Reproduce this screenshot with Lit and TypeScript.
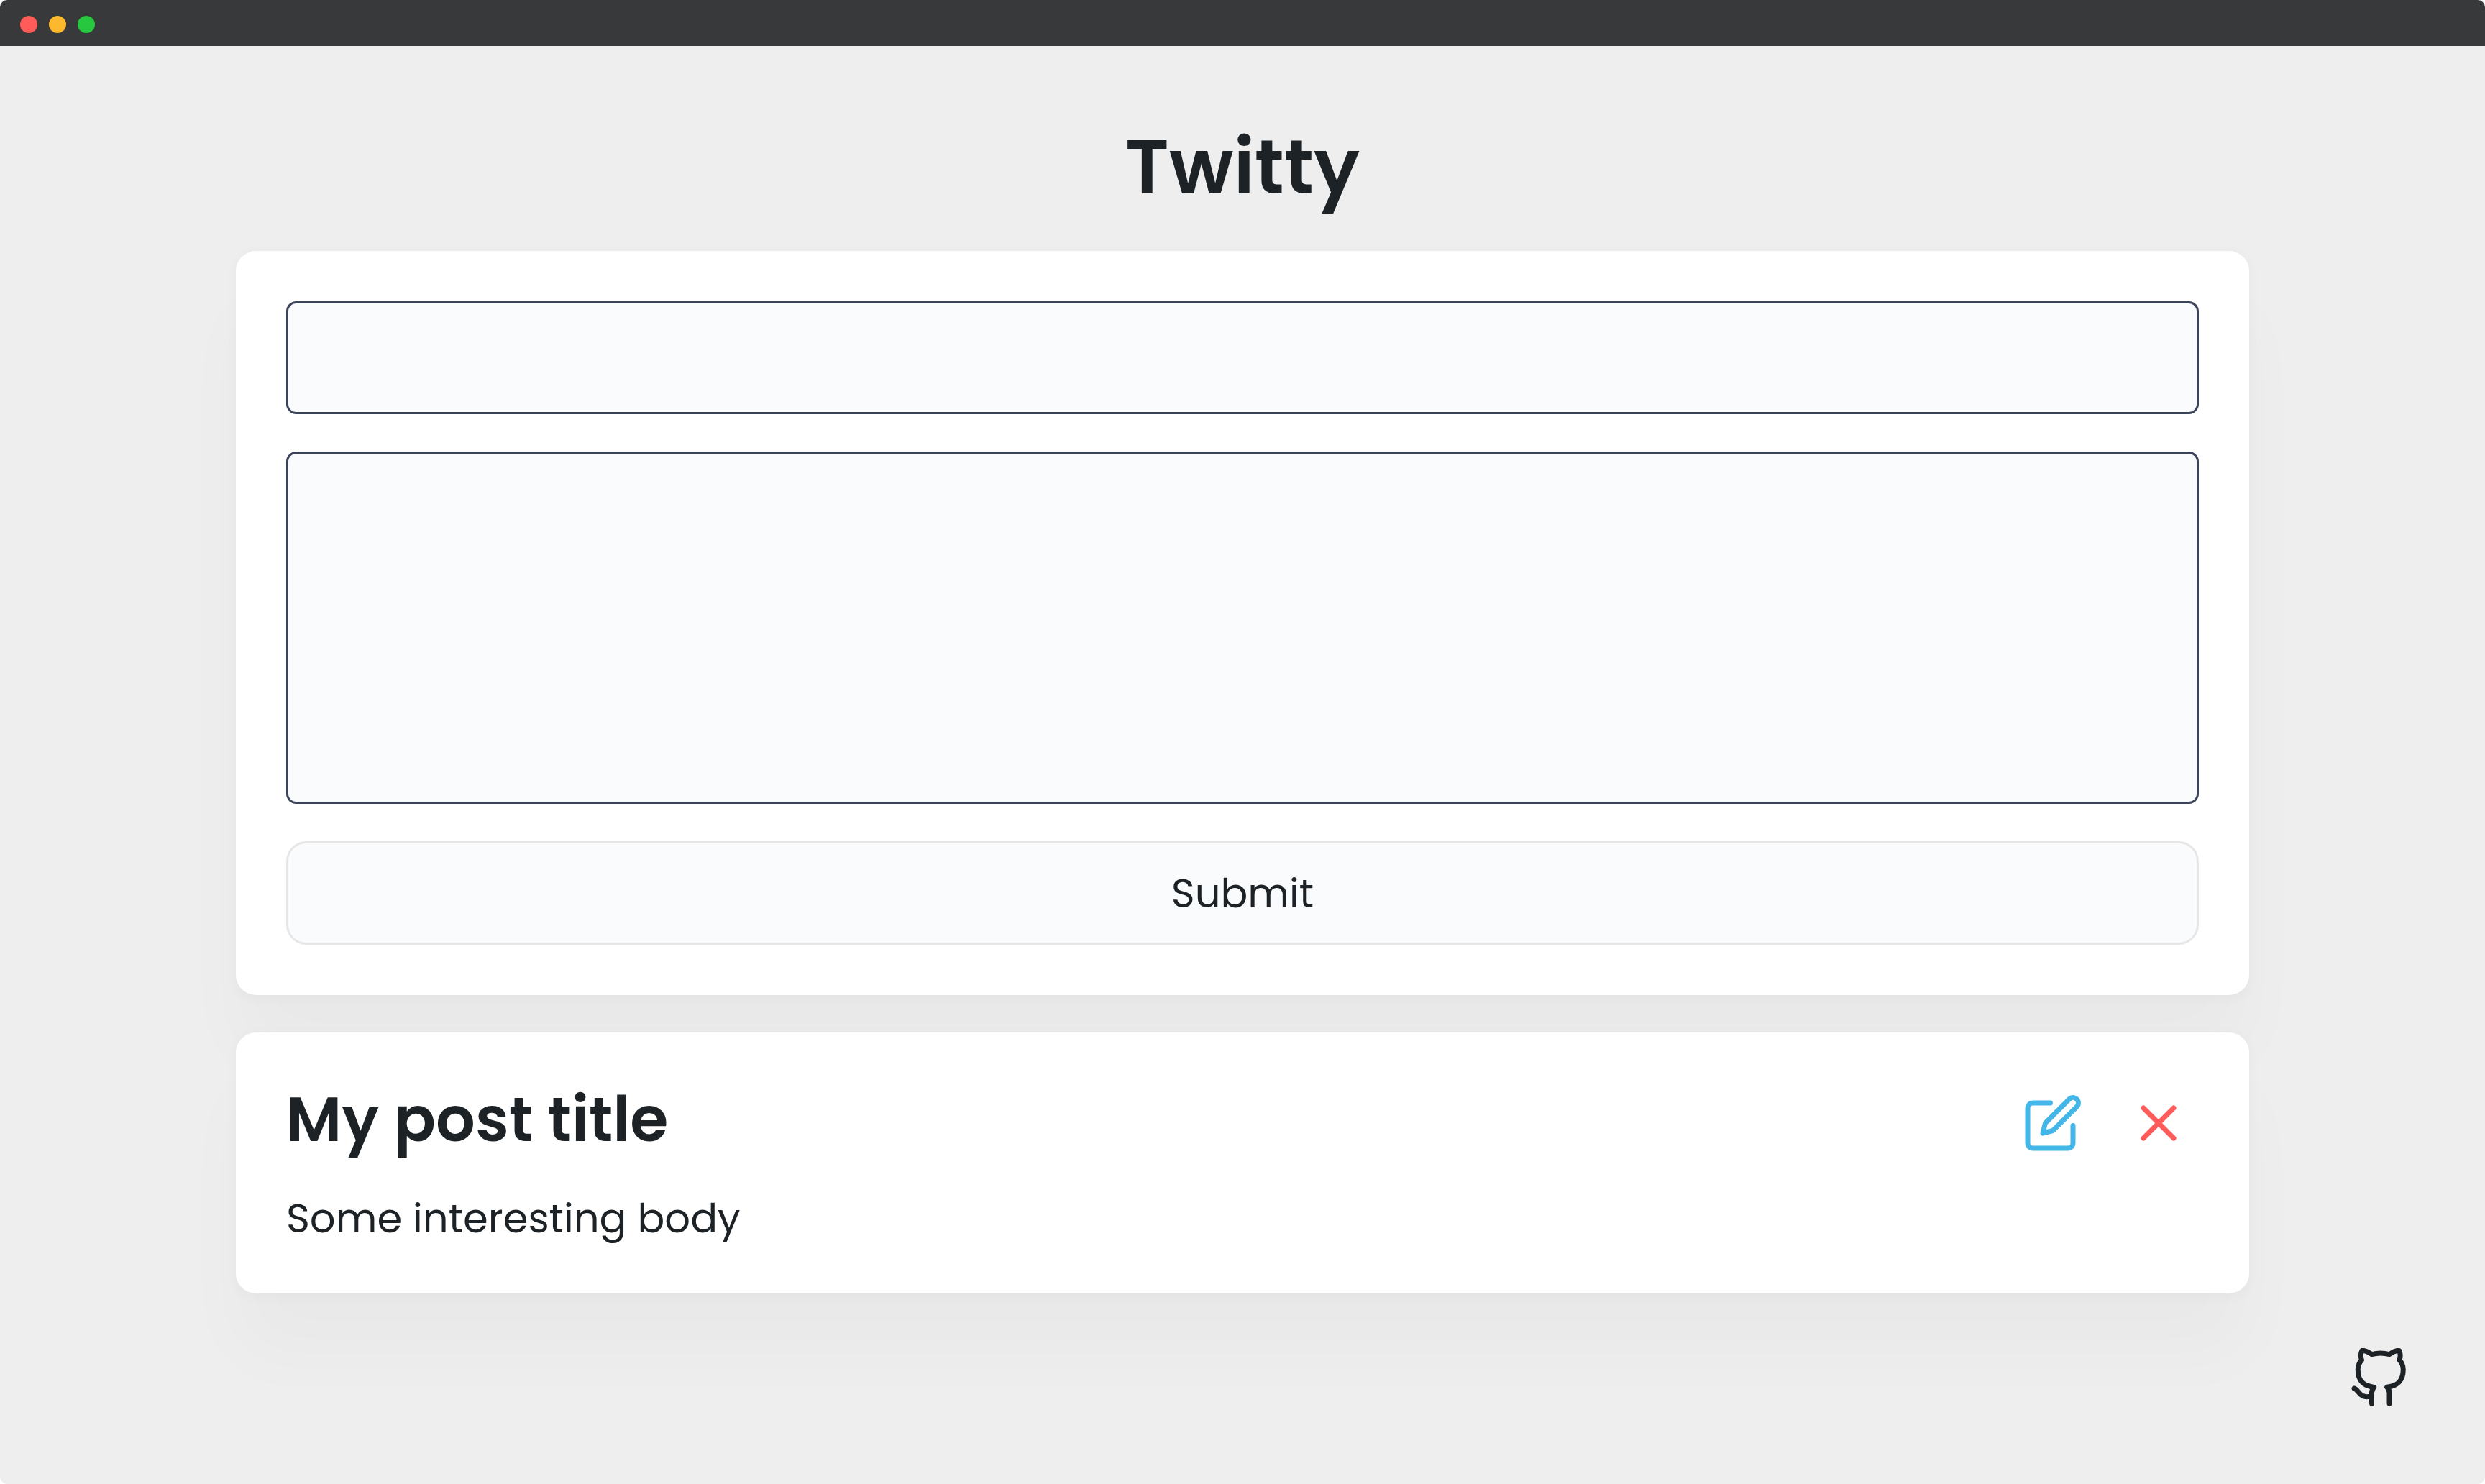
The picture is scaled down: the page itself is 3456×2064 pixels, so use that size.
import { LitElement, html, css, svg } from "lit";
import { customElement, property, state } from "lit/decorators.js";

interface Post {
  id: number;
  title: string;
  body: string;
}

const editIcon = svg`
  <path d="M11 4H4a2 2 0 0 0-2 2v14a2 2 0 0 0 2 2h14a2 2 0 0 0 2-2v-7" />
  <path d="M18.5 2.5a2.121 2.121 0 0 1 3 3L12 15l-4 1 1-4 9.5-9.5z" />
`;

const closeIcon = svg`
  <line x1="18" y1="6" x2="6" y2="18" />
  <line x1="6" y1="6" x2="18" y2="18" />
`;

const githubIcon = svg`
  <path d="M9 19c-5 1.5-5-2.5-7-3m14 6v-3.87a3.37 3.37 0 0 0-.94-2.61c3.14-.35 6.44-1.54 6.44-7A5.44 5.44 0 0 0 20 4.77 5.07 5.07 0 0 0 19.91 1S18.73.65 16 2.48a13.38 13.38 0 0 0-7 0C6.27.65 5.09 1 5.09 1A5.07 5.07 0 0 0 5 4.77a5.44 5.44 0 0 0-1.5 3.78c0 5.42 3.3 6.61 6.44 7A3.37 3.37 0 0 0 9 18.13V22" />
`;

const shared = css`
  * {
    box-sizing: border-box;
  }

  .card {
    padding: 70px;
    border-radius: 28px;
    background: #ffffff;
    box-shadow:
      0 4px 20px rgba(0, 0, 0, 0.03),
      0 84px 98px rgba(0, 0, 0, 0.025);
  }

  .icon {
    display: block;
    width: 84px;
    height: 84px;
    fill: none;
    stroke: currentColor;
    stroke-width: 2;
    stroke-linecap: round;
    stroke-linejoin: round;
  }
`;

@customElement("window-bar")
export class WindowBar extends LitElement {
  static styles = css`
    :host {
      display: flex;
      align-items: center;
      gap: 16px;
      height: 64px;
      padding: 4px 28px 0;
      box-sizing: border-box;
      background: #38393b;
    }

    .dot {
      width: 24px;
      height: 24px;
      border-radius: 50%;
    }

    .close {
      background: #ff5b59;
    }

    .minimize {
      background: #fdb830;
    }

    .zoom {
      background: #27c840;
    }
  `;

  render() {
    return html`
      <span class="dot close"></span>
      <span class="dot minimize"></span>
      <span class="dot zoom"></span>
    `;
  }
}

@customElement("post-form")
export class PostForm extends LitElement {
  static styles = [
    shared,
    css`
      :host {
        display: block;
      }

      .form {
        display: flex;
        flex-direction: column;
        gap: 52px;
      }

      .field {
        display: block;
        width: 100%;
        margin: 0;
        padding: 28px 42px;
        border: 3px solid #3b4358;
        border-radius: 14px;
        outline: none;
        background: #fafbfd;
        color: #1d2226;
        font: inherit;
        resize: none;
      }

      .title {
        height: 157px;
      }

      .body {
        height: 490px;
      }

      .submit {
        height: 144px;
        padding: 0;
        border: 3px solid #e6e6e6;
        border-radius: 28px;
        background: #fafbfd;
        color: #1d2226;
        font: inherit;
        cursor: pointer;
      }
    `,
  ];

  private submit(event: Event) {
    event.preventDefault();
    const form = event.target as HTMLFormElement;
    const data = new FormData(form);
    const title = String(data.get("title") ?? "");
    const body = String(data.get("body") ?? "");
    if (!title && !body) return;
    this.dispatchEvent(new CustomEvent("add-post", { detail: { title, body } }));
    form.reset();
  }

  render() {
    return html`
      <form class="card form" @submit=${this.submit}>
        <input class="field title" type="text" name="title" aria-label="Title" />
        <textarea class="field body" name="body" aria-label="Body"></textarea>
        <button class="submit" type="submit">Submit</button>
      </form>
    `;
  }
}

@customElement("post-card")
export class PostCard extends LitElement {
  static styles = [
    shared,
    css`
      :host {
        display: block;
      }

      .post {
        display: flex;
        align-items: flex-start;
        justify-content: space-between;
      }

      .text {
        display: flex;
        flex-direction: column;
        gap: 52px;
      }

      .title {
        margin: 0;
        font-size: 86px;
        font-weight: 600;
        line-height: 103px;
      }

      .body {
        margin: 0;
        line-height: 68px;
      }

      .actions {
        display: flex;
        gap: 35px;
      }

      .action {
        padding: 14px;
        border: 0;
        background: none;
        cursor: pointer;
      }

      .edit {
        color: #45b6e8;
      }

      .remove {
        color: #ff5a5a;
      }
    `,
  ];

  @property({ attribute: false }) post!: Post;

  private remove() {
    this.dispatchEvent(new CustomEvent("remove-post", { detail: this.post.id }));
  }

  render() {
    return html`
      <article class="card post">
        <div class="text">
          <h2 class="title">${this.post.title}</h2>
          <p class="body">${this.post.body}</p>
        </div>
        <div class="actions">
          <button class="action edit" type="button" aria-label="Edit post">
            <svg class="icon" viewBox="0 0 24 24" aria-hidden="true">${editIcon}</svg>
          </button>
          <button class="action remove" type="button" aria-label="Delete post" @click=${this.remove}>
            <svg class="icon" viewBox="0 0 24 24" aria-hidden="true">${closeIcon}</svg>
          </button>
        </div>
      </article>
    `;
  }
}

@customElement("app-root")
export class AppRoot extends LitElement {
  static styles = [
    shared,
    css`
      :host {
        display: block;
        background: #ffffff;
        color: #1d2226;
        font-family: Poppins, "Open Sans", sans-serif;
        font-size: 56px;
      }

      .window {
        min-height: 100vh;
        border-radius: 10px;
        overflow: hidden;
        background: #eeeeee;
      }

      .page {
        display: flex;
        flex-direction: column;
        gap: 52px;
        max-width: 2940px;
        margin: 0 auto;
        padding: 88px 70px 140px;
      }

      .heading {
        margin: 0 0 -15px;
        font-size: 106px;
        font-weight: 600;
        line-height: 160px;
        text-align: center;
      }

      .github {
        position: fixed;
        right: 105px;
        bottom: 105px;
        color: inherit;
      }
    `,
  ];

  @state() private posts: Post[] = [
    { id: 1, title: "My post title", body: "Some interesting body" },
  ];

  private add(event: CustomEvent) {
    this.posts = [{ id: Date.now(), ...event.detail }, ...this.posts];
  }

  private remove(event: CustomEvent) {
    this.posts = this.posts.filter((post) => post.id !== event.detail);
  }

  render() {
    return html`
      <div class="window">
        <window-bar></window-bar>
        <main class="page">
          <h1 class="heading">Twitty</h1>
          <post-form @add-post=${this.add}></post-form>
          ${this.posts.map(
            (post) => html`<post-card .post=${post} @remove-post=${this.remove}></post-card>`,
          )}
        </main>
        <a class="github" href="https://github.com" aria-label="GitHub">
          <svg class="icon" viewBox="0 0 24 24" aria-hidden="true">${githubIcon}</svg>
        </a>
      </div>
    `;
  }
}
